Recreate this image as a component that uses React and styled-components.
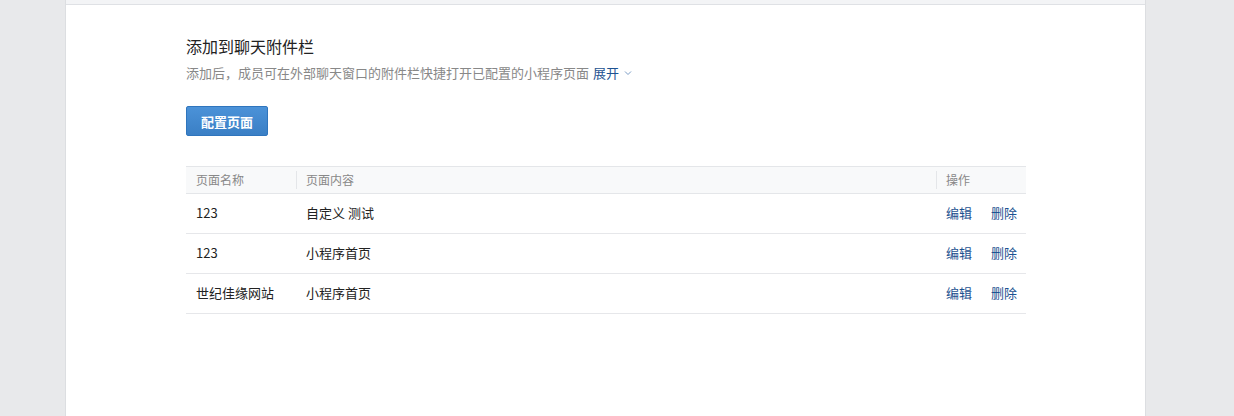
import React from "react";
import styled, { createGlobalStyle } from "styled-components";

const Global = createGlobalStyle`
  html, body { margin: 0; padding: 0; background: #e8e9eb; }
  body { font-family: "Noto Sans CJK SC", "Noto Sans", sans-serif; }
  #root { height: 416px; overflow: hidden; }
`;

const Page = styled.div`
  display: flex;
  height: 416px;
  padding-left: 65px;
  background: #e8e9eb;
`;

const Panel = styled.div`
  width: 1079px;
  background: #fff;
  border-left: 1px solid #dcdee1;
  border-right: 1px solid #dcdee1;
  display: flex;
  flex-direction: column;
`;

const TopStrip = styled.div`
  height: 4px;
  background: #f3f4f6;
  border-bottom: 1px solid #dfe1e5;
`;

const Content = styled.div`
  padding: 30px 0 0 120px;
  display: flex;
  flex-direction: column;
  align-items: flex-start;
`;

const Title = styled.div`
  font-size: 16px;
  line-height: 22px;
  color: #222;
`;

const Desc = styled.div`
  margin-top: 6px;
  font-size: 13px;
  line-height: 20px;
  color: #888;
  display: flex;
  align-items: center;
`;

const Expand = styled.span`
  margin-left: 4px;
  color: #1d5291;
  display: inline-flex;
  align-items: center;
  gap: 5px;
`;

const Button = styled.button`
  margin-top: 23px;
  height: 30px;
  width: 82px;
  border: 1px solid #2f75bd;
  border-radius: 2px;
  background: linear-gradient(#4b92d8, #3a7fc5);
  color: #fff;
  font-family: inherit;
  font-size: 13px;
  font-weight: 700;
  padding: 0;
`;

const Table = styled.div`
  margin-top: 30px;
  width: 840px;
  display: flex;
  flex-direction: column;
`;

const Row = styled.div`
  display: grid;
  grid-template-columns: 110px 1fr 90px;
  align-items: center;
  height: ${(p) => (p.$head ? "26px" : "39px")};
  border-bottom: 1px solid ${(p) => (p.$head ? "#e4e6e9" : "#e6e7ea")};
  border-top: ${(p) => (p.$head ? "1px solid #e4e6e9" : "none")};
  background: ${(p) => (p.$head ? "#f8f9fa" : "#fff")};
  font-size: ${(p) => (p.$head ? "12px" : "13px")};
  color: ${(p) => (p.$head ? "#888" : "#222")};
`;

const Cell = styled.div`
  padding-left: 10px;
  padding-bottom: 2px;
  position: relative;
  white-space: nowrap;
  display: flex;
  gap: 19px;
  ${(p) =>
    p.$divider
      ? `&::before { content: ""; position: absolute; left: 0; top: 50%; margin-top: -9px; height: 18px; width: 1px; background: #e4e6e9; }`
      : ""}
`;

const Link = styled.span`
  color: #1d5291;
`;

const rows = [
  ["123", "自定义 测试"],
  ["123", "小程序首页"],
  ["世纪佳缘网站", "小程序首页"],
];

export default function App() {
  return (
    <>
      <Global />
      <Page>
        <Panel>
          <TopStrip />
          <Content>
            <Title>添加到聊天附件栏</Title>
            <Desc>
              添加后，成员可在外部聊天窗口的附件栏快捷打开已配置的小程序页面
              <Expand>
                展开
                <svg width="8" height="6" viewBox="0 0 8 6">
                  <path d="M1 1.5 L4 4.5 L7 1.5" fill="none" stroke="#7a9cc6" strokeWidth="1" />
                </svg>
              </Expand>
            </Desc>
            <Button>配置页面</Button>
            <Table>
              <Row $head>
                <Cell>页面名称</Cell>
                <Cell $divider>页面内容</Cell>
                <Cell $divider>操作</Cell>
              </Row>
              {rows.map((r, i) => (
                <Row key={i}>
                  <Cell>{r[0]}</Cell>
                  <Cell>{r[1]}</Cell>
                  <Cell>
                    <Link>编辑</Link>
                    <Link>删除</Link>
                  </Cell>
                </Row>
              ))}
            </Table>
          </Content>
        </Panel>
      </Page>
    </>
  );
}
